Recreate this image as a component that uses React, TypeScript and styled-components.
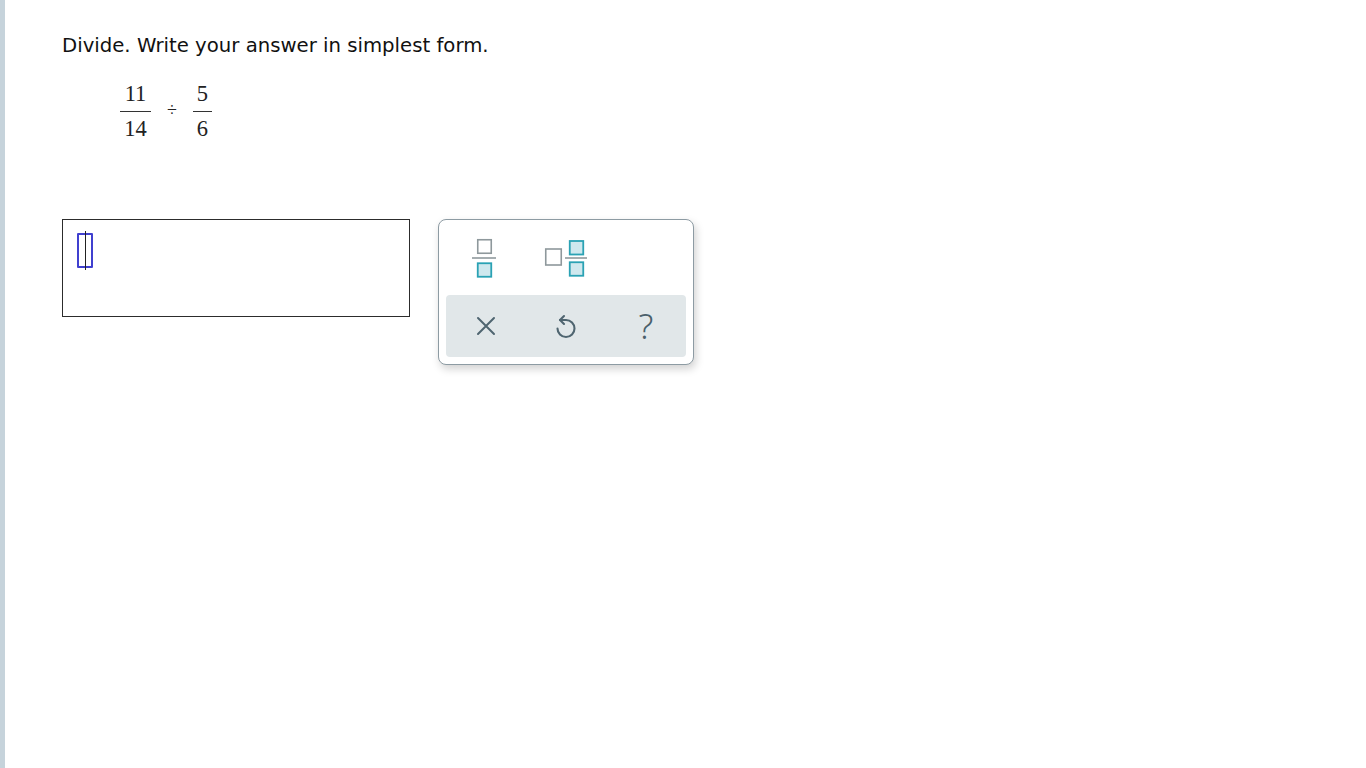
import React from "react";
import styled, { createGlobalStyle } from "styled-components";

const Global = createGlobalStyle`
  html, body { margin: 0; padding: 0; background: #fff; }
  body { font-family: "DejaVu Sans", Verdana, sans-serif; }
`;

const Page = styled.div`
  display: flex;
  min-height: 100vh;
`;

const SideBar = styled.div`
  width: 5px;
  flex: none;
  background: #c6d3db;
`;

const Content = styled.main`
  flex: 1;
  padding: 34px 0 0 57px;
`;

const Prompt = styled.p`
  margin: 0;
  font-size: 19.7px;
  line-height: 24px;
  color: #111;
`;

const Expr = styled.div`
  display: flex;
  align-items: center;
  gap: 16px;
  margin: 25px 0 0 58px;
  font-family: "Liberation Serif", "Times New Roman", serif;
  font-size: 22.5px;
  color: #222;
`;

const Frac = styled.div`
  display: flex;
  flex-direction: column;
  align-items: center;
`;

const Num = styled.span`
  line-height: 22px;
  padding: 0 1px 6px;
`;

const Bar = styled.span<{ $w: number }>`
  width: ${(p) => p.$w}px;
  height: 1px;
  background: #333;
`;

const Den = styled.span`
  line-height: 22px;
  padding-top: 6px;
`;

const Op = styled.span`
  font-size: 18px;
  margin-top: -2px;
`;

const Row = styled.div`
  display: flex;
  align-items: flex-start;
  gap: 28px;
  margin-top: 79px;
`;

const AnswerBox = styled.div`
  width: 332px;
  height: 84px;
  border: 1.5px solid #2c2c2c;
  padding: 12px 0 0 14px;
  box-sizing: content-box;
`;

const Cursor = styled.div`
  position: relative;
  width: 12px;
  height: 31px;
  border: 2px solid #4040cf;
  border-radius: 1px;
  margin-top: 1px;
  &::before {
    content: "";
    position: absolute;
    left: 5.5px;
    top: -4px;
    width: 1px;
    height: 39px;
    background: #222;
  }
`;

const Palette = styled.div`
  width: 256px;
  border: 1px solid #8d9ba3;
  border-radius: 8px;
  background: #fff;
  box-shadow: 2px 4px 8px rgba(0, 0, 0, 0.18);
  padding: 0 7px 7px;
  box-sizing: border-box;
`;

const TopRow = styled.div`
  display: flex;
  height: 75px;
  align-items: center;
  padding-left: 25px;
  gap: 47px;
`;

const KeyBtn = styled.button`
  border: none;
  background: transparent;
  padding: 0;
  display: flex;
  align-items: center;
  justify-content: center;
  cursor: pointer;
`;

const BottomRow = styled.div`
  height: 62px;
  border-radius: 4px;
  background: #e1e7e9;
  display: grid;
  grid-template-columns: repeat(3, 80px);
  align-items: center;
`;

const ToolBtn = styled.button`
  border: none;
  background: transparent;
  padding: 0;
  height: 100%;
  display: flex;
  align-items: center;
  justify-content: center;
  cursor: pointer;
  color: #4f6570;
`;

const Question = styled.span`
  font-size: 35px;
  line-height: 1;
  font-weight: 300;
  color: #4a606b;
  font-family: "Noto Sans", sans-serif;
  margin-top: -2px;
`;

const GRAY = "#8e989c";
const TEAL = "#2aa2b4";
const TFILL = "#cfe8ee";
const ICON = "#4f6570";

const FractionIcon = () => (
  <svg width="26" height="40" viewBox="0 0 26 40">
    <rect x="6.75" y="1.75" width="13.5" height="13.5" fill="none" stroke={GRAY} strokeWidth="1.6" />
    <line x1="1" y1="20" x2="25" y2="20" stroke={GRAY} strokeWidth="1.6" />
    <rect x="6.75" y="25.25" width="13.5" height="13.5" fill={TFILL} stroke={TEAL} strokeWidth="1.8" />
  </svg>
);

const MixedIcon = () => (
  <svg width="44" height="40" viewBox="0 0 44 40">
    <rect x="1.75" y="11" width="15.5" height="16" fill="none" stroke={GRAY} strokeWidth="1.6" />
    <rect x="25.75" y="3" width="13.5" height="13.5" fill={TFILL} stroke={TEAL} strokeWidth="1.8" />
    <line x1="21" y1="20" x2="43" y2="20" stroke={GRAY} strokeWidth="1.6" />
    <rect x="25.75" y="24.25" width="13.5" height="13.5" fill={TFILL} stroke={TEAL} strokeWidth="1.8" />
  </svg>
);

const XIcon = () => (
  <svg width="20" height="20" viewBox="0 0 20 20">
    <path d="M2 2 L18 18 M18 2 L2 18" stroke={ICON} strokeWidth="2" strokeLinecap="round" />
  </svg>
);

const UndoIcon = () => (
  <svg width="24" height="28" viewBox="0 0 24 28">
    <path
      d="M6 8 L12 8 A8.5 8.5 0 1 1 3.5 16.5"
      fill="none"
      stroke={ICON}
      strokeWidth="2.1"
      strokeLinecap="round"
    />
    <path d="M10 4 L6 8 L10 12" fill="none" stroke={ICON} strokeWidth="2.1" strokeLinecap="round" strokeLinejoin="round" />
  </svg>
);

export default function App() {
  return (
    <>
      <Global />
      <Page>
        <SideBar />
        <Content>
          <Prompt>Divide. Write your answer in simplest form.</Prompt>
          <Expr>
            <Frac>
              <Num>11</Num>
              <Bar $w={31} />
              <Den>14</Den>
            </Frac>
            <Op>÷</Op>
            <Frac>
              <Num>5</Num>
              <Bar $w={19} />
              <Den>6</Den>
            </Frac>
          </Expr>
          <Row>
            <AnswerBox>
              <Cursor />
            </AnswerBox>
            <Palette>
              <TopRow>
                <KeyBtn aria-label="fraction">
                  <FractionIcon />
                </KeyBtn>
                <KeyBtn aria-label="mixed number">
                  <MixedIcon />
                </KeyBtn>
              </TopRow>
              <BottomRow>
                <ToolBtn aria-label="clear">
                  <XIcon />
                </ToolBtn>
                <ToolBtn aria-label="undo">
                  <UndoIcon />
                </ToolBtn>
                <ToolBtn aria-label="help">
                  <Question>?</Question>
                </ToolBtn>
              </BottomRow>
            </Palette>
          </Row>
        </Content>
      </Page>
    </>
  );
}
